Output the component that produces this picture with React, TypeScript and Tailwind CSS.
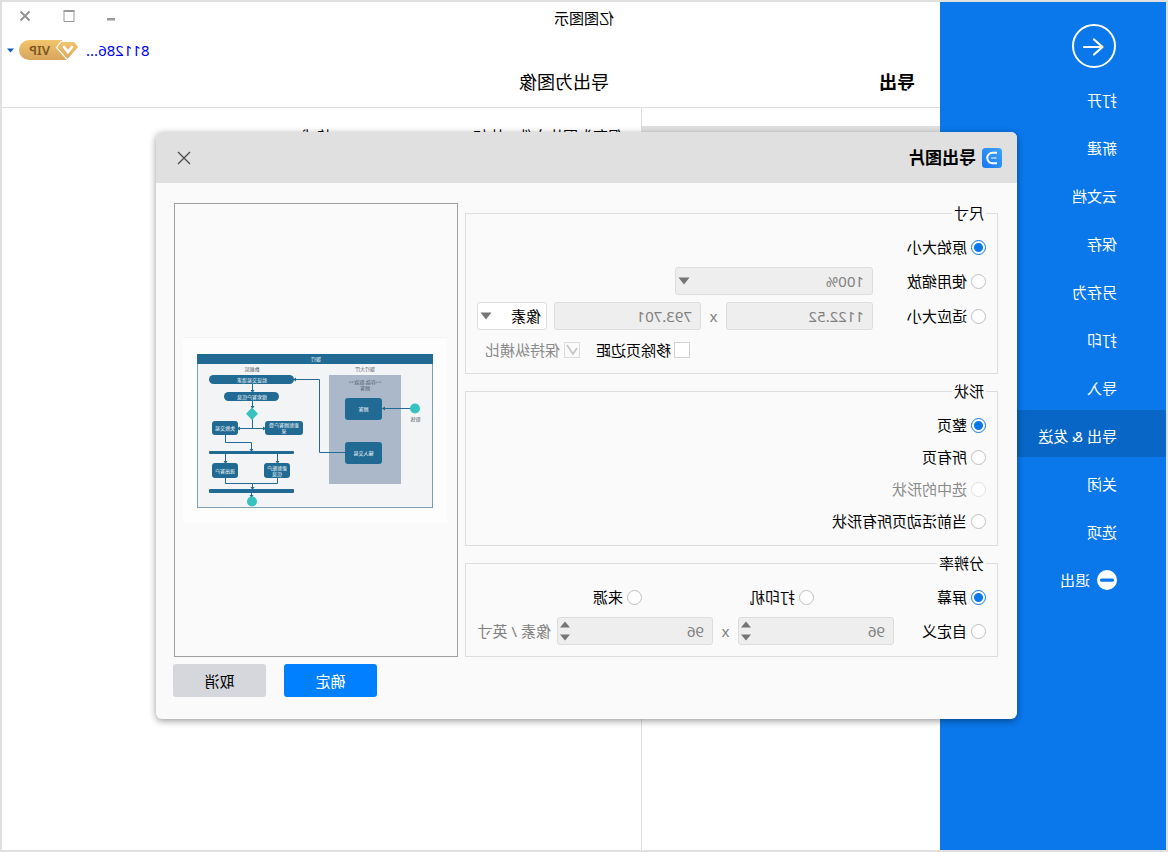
import type { ReactNode } from "react";

const menuItems = ["打开", "新建", "云文档", "保存", "另存为", "打印", "导入", "导出 & 发送", "关闭", "选项"];

const RADIO =
    "size-[15px] shrink-0 appearance-none rounded-full border border-[#c0c0c0] bg-white checked:border-[#0a77eb] checked:bg-[radial-gradient(circle,#0a77eb_0_4px,#ffffff_5px)] disabled:border-[#e2e2e2]";
const FIELD = "h-7 w-full rounded-[3px] border border-[#dddde0] bg-[#eeeeee] pl-2 text-[#808080]";

interface RadioProps {
    name: string;
    label: string;
    checked?: boolean;
    disabled?: boolean;
    className?: string;
}

const Radio = ({ name, label, checked, disabled, className = "" }: RadioProps) => (
    <label className={`flex h-5 shrink-0 items-center gap-1 ${disabled ? "text-[#8a8a8a]" : ""} ${className}`}>
        <input type="radio" name={name} defaultChecked={checked} disabled={disabled} className={RADIO} />
        {label}
    </label>
);

const Group = ({ title, className = "", children }: { title: string; className?: string; children: ReactNode }) => (
    <fieldset className={`min-w-0 border border-[#dedee0] px-[11px] ${className}`}>
        <legend className="h-5 px-[2px] leading-5">{title}</legend>
        {children}
    </fieldset>
);

const CaretDown = () => (
    <svg viewBox="0 0 12 8" className="pointer-events-none absolute right-[3px] top-[10px] h-2 w-3" fill="#757575">
        <path d="M0.5 0.5h11L6 7.5z" />
    </svg>
);

const Spinner = ({ label }: { label: string }) => (
    <div className="relative w-[156px] shrink-0">
        <input aria-label={label} defaultValue="96" disabled className={FIELD} />
        <div className="absolute right-[3px] top-1 flex flex-col gap-[6px]">
            <button aria-label="增加" disabled className="h-[7px] w-[10px]">
                <svg viewBox="0 0 10 7" className="block" fill="#757575"><path d="M0 6.5h10L5 0.5z" /></svg>
            </button>
            <button aria-label="减少" disabled className="h-[7px] w-[10px]">
                <svg viewBox="0 0 10 7" className="block" fill="#757575"><path d="M0 0.5h10L5 6.5z" /></svg>
            </button>
        </div>
    </div>
);

const Sidebar = () => (
    <aside className="w-[226px] shrink-0 bg-[#0a77eb] text-white">
        <button aria-label="返回" className="ml-[50px] mt-[22px] block size-11">
            <svg viewBox="0 0 44 44" fill="none" stroke="white" strokeWidth="2">
                <circle cx="22" cy="22" r="21" />
                <path d="M32 23H14" strokeWidth="2" strokeLinecap="round" />
                <path d="M22 15.5L13.5 23L22 30.5" strokeWidth="2.2" strokeLinecap="round" strokeLinejoin="round" />
            </svg>
        </button>
        <nav className="mt-[6px] flex flex-col gap-px">
            {menuItems.map((item) => (
                <a
                    key={item}
                    href="#"
                    className={`flex h-[47px] items-center pl-[49px] pt-1 ${item === "导出 & 发送" ? "bg-[#0866c6]" : ""}`}
                >
                    {item}
                </a>
            ))}
            <a href="#" className="flex h-[47px] items-center gap-[7px] pl-[49px] pt-1">
                <svg viewBox="0 0 20 20" className="size-5">
                    <circle cx="10" cy="10" r="10" fill="white" />
                    <rect x="3" y="8.5" width="14" height="3.2" rx="1.5" fill="#0a77eb" />
                </svg>
                退出
            </a>
        </nav>
    </aside>
);

const TitleBar = () => (
    <header className="h-[106px] shrink-0 border-b border-[#dedee0]">
        <div className="flex h-8 items-center">
            <h1 className="flex-1 pl-[326px]">亿图图示</h1>
            <div className="flex items-center gap-8 pb-1 pr-[17px]">
                <button aria-label="最小化">
                    <svg viewBox="0 0 8 12" className="h-3 w-2"><path d="M0 8h8v2.5H0z" fill="#9a9a9a" /></svg>
                </button>
                <button aria-label="最大化">
                    <svg viewBox="0 0 12 12" className="size-3" fill="none" stroke="#999999">
                        <path d="M1 1.5h10v10H1z" />
                        <path d="M0.5 1h11" strokeWidth="2" />
                    </svg>
                </button>
                <button aria-label="关闭窗口">
                    <svg viewBox="0 0 12 12" className="size-3" stroke="#949494" strokeWidth="2">
                        <path d="M1.5 1.5l9 9M10.5 1.5l-9 9" />
                    </svg>
                </button>
            </div>
        </div>
        <div className="flex h-8 items-center justify-end pr-[5px]">
            <a href="#" className="text-[#0000f0]">811286...</a>
            <svg viewBox="0 0 60 20" className="ml-[7px] h-5 w-[60px]">
                <defs>
                    <linearGradient id="vip" x1="0" y1="0" x2="0" y2="1">
                        <stop offset="0" stopColor="#f1c56c" />
                        <stop offset="1" stopColor="#d9a55e" />
                    </linearGradient>
                </defs>
                <path d="M17 0H50a10 10 0 0 1 0 20H12z" fill="url(#vip)" />
                <path d="M4.5 1.500H18L22.500 7.500L11.500 20L0 7z" fill="url(#vip)" stroke="white" strokeWidth="1.200" />
                <path d="M7 7L11 12L15 7" fill="none" stroke="white" strokeWidth="2.800" strokeLinecap="round" />
                <text x="39.500" y="14.500" textAnchor="middle" className="text-[13px] font-semibold" fill="#7d5620">VIP</text>
            </svg>
            <svg viewBox="0 0 7 5" className="ml-[5px] h-[5px] w-[7px]" fill="#0a5cb8"><path d="M0 0.500h7L3.500 4.500z" /></svg>
        </div>
        <div className="flex items-center pt-[2px] text-[18px] leading-7">
            <h2 className="w-[305px] shrink-0 pl-[25px] font-bold">导出</h2>
            <h2 className="pl-[26px]">导出为图像</h2>
        </div>
    </header>
);

const FlowChart = () => (
    <svg viewBox="0 0 264 186" className="mr-[-2px] w-[264px] text-[5px]" fill="#216a93">
        <rect width="264" height="186" fill="#fdfdfd" />
        <path d="M0 0.500H264" stroke="#f4f4f4" />
        <rect x="14.500" y="17.500" width="235" height="153" fill="#f3f4f6" stroke="#7f9db4" />
        <rect x="14" y="17" width="236" height="10" />
        <rect x="46" y="38" width="72" height="109" fill="#abb8c9" />
        <g fill="none" stroke="#216a93">
            <path d="M37 71.500H65M102 115.500H127.500V42.500H153" />
            <path d="M194.500 47V55M194.500 64V71M194.500 82V91.500M182 91.500H209" />
            <path d="M221.500 98V105.500H195.500V114M221.500 117V126M169.500 117V126" />
            <path d="M221.500 141V146.500H169.500V141M194.500 146.500V152M195.500 156V160" />
        </g>
        <path d="M62 69.500v4l3-2zM151 40.500v4l3-2zM192.500 53h4l-2 3zM192.500 69h4l-2 3zM184 89.500v4l-3-2zM207 89.500v4l3-2zM193.500 112h4l-2 3zM219.500 124h4l-2 3zM167.500 124h4l-2 3zM192.500 150h4l-2 3zM193.500 158h4l-2 3z" />
        <rect x="65" y="61" width="37" height="22" rx="3" />
        <rect x="65" y="105" width="37" height="22" rx="3" />
        <rect x="153" y="38" width="85" height="9" rx="4.500" />
        <rect x="168" y="55" width="55" height="9" rx="4.500" />
        <rect x="209" y="84" width="26" height="14" rx="3" />
        <rect x="144" y="84" width="38" height="14" rx="3" />
        <rect x="153" y="114" width="85" height="3" rx="1" />
        <rect x="209" y="126" width="26" height="15" rx="3" />
        <rect x="157" y="126" width="26" height="15" rx="3" />
        <rect x="153" y="152" width="85" height="4" rx="1" />
        <g fill="#35c2c1">
            <circle cx="32" cy="71.500" r="5" />
            <path d="M195 70.500l6 6.200l-6 6.200l-6-6.200z" />
            <circle cx="195" cy="164.500" r="5" />
        </g>
        <g fill="white" textAnchor="middle">
            <text x="131" y="24">银行</text>
            <text x="83.500" y="73.500">顾客</text>
            <text x="83.500" y="117.500">输入交易</text>
            <text x="195" y="44.500">验证交易请求</text>
            <text x="195" y="61.500">搜索客户信息</text>
            <text x="222" y="93">失败交易</text>
            <text x="163" y="90">更新顾客户登</text>
            <text x="163" y="96">录</text>
            <text x="222" y="135.500">退出客户</text>
            <text x="170" y="132.500">更新账户</text>
            <text x="170" y="138.500">信息</text>
        </g>
        <g fill="#4d5a66" textAnchor="middle">
            <text x="195" y="34">数据层</text>
            <text x="82" y="34">银行大厅</text>
            <text x="82" y="47">{"<<存款,取款>>"}</text>
            <text x="82" y="53">顾客</text>
            <text x="31.500" y="84">取钱</text>
        </g>
    </svg>
);

const SizeGroup = () => (
    <Group title="尺寸" className="h-[171px]">
        <Radio name="size" label="原始大小" checked className="mt-[14px]" />
        <div className="mt-[10px] flex items-center">
            <Radio name="size" label="使用缩放" className="w-[113px]" />
            <div className="relative w-[198px]">
                <select aria-label="缩放比例" disabled className={`${FIELD} appearance-none opacity-100`}>
                    <option>100%</option>
                </select>
                <CaretDown />
            </div>
        </div>
        <div className="mt-[7px] flex items-center">
            <Radio name="size" label="适应大小" className="w-[113px]" />
            <div className="w-[147px] shrink-0">
                <input aria-label="宽度" defaultValue="1122.52" disabled className={FIELD} />
            </div>
            <span className="w-[25px] text-center text-[#808080]">x</span>
            <div className="w-[147px] shrink-0">
                <input aria-label="高度" defaultValue="793.701" disabled className={FIELD} />
            </div>
            <div className="relative ml-auto w-[70px]">
                <select aria-label="单位" className="h-7 w-full appearance-none rounded-[3px] border border-[#dddde0] bg-white pl-[5px]">
                    <option>像素</option>
                </select>
                <CaretDown />
            </div>
        </div>
        <div className="mt-[10px] flex h-5 items-center gap-4 pl-[296px]">
            <label className="flex items-center gap-[3px]">
                <input type="checkbox" className="size-4 appearance-none border border-[#d2d2d6] bg-white" />
                移除页边距
            </label>
            <label className="flex items-center gap-1 text-[#8a8a8a]">
                <span className="relative size-4">
                    <input type="checkbox" defaultChecked disabled className="block size-4 appearance-none border border-[#dddde0] bg-[#fafafa]" />
                    <svg viewBox="0 0 16 16" className="pointer-events-none absolute inset-0" fill="none" stroke="#c4c4c4" strokeWidth="1.600">
                        <path d="M3 6L7 12L13 3" />
                    </svg>
                </span>
                保持纵横比
            </label>
        </div>
    </Group>
);

const ExportDialog = () => (
    <section
        role="dialog"
        aria-label="导出图片"
        className="w-[861px] rounded-md bg-[#fafafa] shadow-[0_2px_7px_rgba(0,0,0,0.4)]"
    >
        <div className="flex h-[51px] items-center rounded-t-md bg-[#e0e0e0] pl-[15px] pr-[21px]">
            <svg viewBox="0 0 20 20" className="size-5">
                <defs>
                    <linearGradient id="logo" x1="0" y1="0" x2="1" y2="1">
                        <stop offset="0" stopColor="#3fa4f8" />
                        <stop offset="1" stopColor="#1677f5" />
                    </linearGradient>
                </defs>
                <rect width="20" height="20" rx="3.500" fill="url(#logo)" />
                <path d="M5 4.800H9.500A5.200 5.200 0 0 1 9.500 15.200H5" fill="none" stroke="white" strokeWidth="2" />
                <path d="M5.500 10H11" stroke="#a9d0fb" strokeWidth="1.800" />
            </svg>
            <h2 className="ml-[6px] flex-1 text-[17px] font-bold">导出图片</h2>
            <button aria-label="关闭">
                <svg viewBox="0 0 14 14" className="size-[14px]" stroke="#4a4a4a" strokeWidth="1.300">
                    <path d="M1 1l12 12M13 1L1 13" />
                </svg>
            </button>
        </div>
        <div className="flex gap-[7px] pl-[19px] pr-[18px] pt-5">
            <div className="flex flex-1 flex-col gap-[7px]">
                <SizeGroup />
                <Group title="形状" className="h-[165px]">
                    <div className="mt-[14px] flex flex-col gap-3">
                        <Radio name="shape" label="整页" checked />
                        <Radio name="shape" label="所有页" />
                        <Radio name="shape" label="选中的形状" disabled />
                        <Radio name="shape" label="当前活动页所有形状" />
                    </div>
                </Group>
                <Group title="分辨率" className="h-[104px]">
                    <div className="mt-[14px] flex">
                        <Radio name="dpi" label="屏幕" checked className="w-[172px]" />
                        <Radio name="dpi" label="打印机" className="w-[172px]" />
                        <Radio name="dpi" label="来源" />
                    </div>
                    <div className="mt-[10px] flex items-center text-[#808080]">
                        <Radio name="dpi" label="自定义" className="w-[92px] text-black" />
                        <Spinner label="水平分辨率" />
                        <span className="w-[25px] text-center">x</span>
                        <Spinner label="垂直分辨率" />
                        <span className="ml-[6px] whitespace-nowrap">像素 / 英寸</span>
                    </div>
                </Group>
            </div>
            <div className="flex w-[284px] shrink-0 items-center justify-center border border-[#a0a0a0]">
                <FlowChart />
            </div>
        </div>
        <div className="flex justify-end gap-[18px] pb-[22px] pr-[17px] pt-[7px]">
            <button className="h-[33px] w-[93px] rounded-[3px] bg-[#0080ff] text-white">确定</button>
            <button className="h-[33px] w-[93px] rounded-[3px] bg-[#d5d7dc]">取消</button>
        </div>
    </section>
);

export default function App() {
    return (
        <div className="relative flex min-h-screen -scale-x-100 border-2 border-[#e0e0e0] bg-white font-['Noto_Sans','Noto_Sans_CJK_SC',sans-serif] text-[15px] leading-5 text-black">
            <Sidebar />
            <div className="flex min-w-0 flex-1 flex-col">
                <TitleBar />
                <main className="flex flex-1">
                    <div className="w-[299px] shrink-0 border-r border-[#dedee0] pt-[18px]">
                        <div className="h-12 bg-[#e0e0e0]" />
                    </div>
                    <p className="pl-[18px] pt-[18px]">保存为图片文件，比如BMP, JPEG, PNG, GIF格式。</p>
                </main>
            </div>
            <div className="absolute inset-0 flex items-center justify-center pb-px pr-[5px]">
                <ExportDialog />
            </div>
        </div>
    );
}
